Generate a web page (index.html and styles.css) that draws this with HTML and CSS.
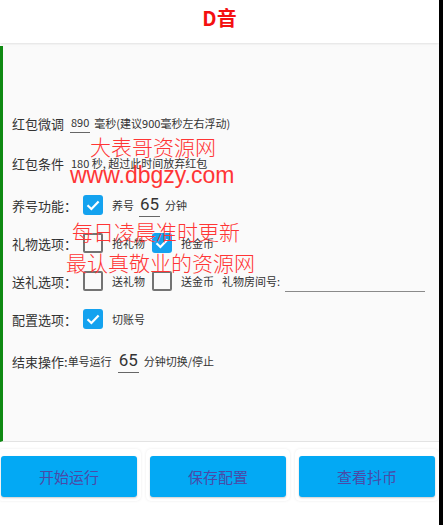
FILE: index.html
```html
<!DOCTYPE html>
<html lang="zh-CN">
<head>
<meta charset="utf-8">
<title>D音</title>
<link rel="stylesheet" href="styles.css">
</head>
<body>
<div class="app">
  <header class="topbar"><h1 class="title">D音</h1></header>
  <main class="content">
    <div class="row row-first"><span class="label">红包微调</span><span class="field">890</span><span class="small">毫秒(建议900毫秒左右浮动)</span></div>
    <div class="row"><span class="label">红包条件</span><span class="small plain">180 秒, 超过此时间放弃红包</span></div>
    <div class="row row-lg"><span class="label fixed">养号功能：</span><span class="cb on"><svg viewBox="0 0 20 20"><path d="M4.5 10.2 L8.4 14 L15.6 6.4"/></svg></span><span class="small opt">养号</span><span class="num">65</span><span class="small">分钟</span></div>
    <div class="row row-sm"><span class="label fixed">礼物选项：</span><span class="cb"></span><span class="small opt">抢礼物</span><span class="cb on"><svg viewBox="0 0 20 20"><path d="M4.5 10.2 L8.4 14 L15.6 6.4"/></svg></span><span class="small opt">抢金币</span></div>
    <div class="row row-sm"><span class="label fixed">送礼选项：</span><span class="cb"></span><span class="small opt">送礼物</span><span class="cb"></span><span class="small opt">送金币</span><span class="small room">礼物房间号:</span><span class="line"></span></div>
    <div class="row row-sm"><span class="label fixed">配置选项：</span><span class="cb on"><svg viewBox="0 0 20 20"><path d="M4.5 10.2 L8.4 14 L15.6 6.4"/></svg></span><span class="small opt">切账号</span></div>
    <div class="row row-lg"><span class="label">结束操作:</span><span class="small">单号运行</span><span class="num num-end">65</span><span class="small">分钟切换/停止</span></div>
    <div class="watermark">
      <div class="wm wm1">大表哥资源网</div>
      <div class="wm wm2">www.dbgzy.com</div>
      <div class="wm wm3">每日凌晨准时更新</div>
      <div class="wm wm4">最认真敬业的资源网</div>
    </div>
  </main>
  <footer class="actions">
    <div class="card card-first"><button class="btn">开始运行</button></div>
    <div class="card"><button class="btn">保存配置</button></div>
    <div class="card"><button class="btn">查看抖币</button></div>
  </footer>
</div>
<div class="edge"></div>
</body>
</html>
```

FILE: styles.css
```css
html, body {
  margin: 0;
  padding: 0;
  height: 100%;
}
body {
  display: flex;
  background: #fff;
  font-family: Roboto, "Noto Sans CJK SC", sans-serif;
  color: #333;
  overflow: hidden;
}
.app {
  width: 439px;
  height: 525px;
  display: flex;
  flex-direction: column;
  background: #fff;
}
.edge {
  flex: 1;
  background: #000;
}
.topbar {
  height: 43px;
  background: #fff;
  box-shadow: 0 1px 3px rgba(0,0,0,0.14);
  position: relative;
  z-index: 1;
}
.title {
  margin: 0;
  padding-top: 5px;
  text-align: center;
  font-family: "Noto Sans CJK SC", sans-serif;
  font-size: 20px;
  line-height: 26px;
  font-weight: 700;
  color: #f41010;
}
.content {
  position: relative;
  margin-top: 3px;
  height: 396px;
  box-sizing: border-box;
  border-left: 3px solid #0f8a12;
  border-bottom: 1px solid #e3e3e3;
  background: #fafafa;
  padding: 65px 0 0 9px;
}
.row {
  display: flex;
  align-items: center;
  height: 24px;
  margin-top: 16px;
  white-space: nowrap;
}
.row-first { margin-top: 0; }
.row-lg { margin-top: 18px; }
.row-sm { margin-top: 14px; }
.label {
  font-family: "Noto Sans CJK SC", sans-serif;
  font-size: 13px;
  color: #333;
}
.label.fixed {
  width: 71px;
}
.small {
  font-family: "Noto Sans CJK SC", sans-serif;
  font-size: 11px;
  color: #333;
}
.plain { margin-left: 7px; }
.field {
  font-family: "Noto Sans CJK SC", sans-serif;
  font-size: 11px;
  line-height: 13px;
  padding: 2px 1px 3px;
  margin: 0 4px 0 6px;
  border-bottom: 1px solid #666;
  color: #333;
}
.cb {
  width: 20px;
  height: 20px;
  box-sizing: border-box;
  border: 2px solid #737373;
  border-radius: 2px;
  flex: none;
}
.cb.on {
  border: none;
  background: #14a2ef;
  border-radius: 3px;
}
.cb svg {
  display: block;
  width: 20px;
  height: 20px;
}
.cb path {
  fill: none;
  stroke: #fff;
  stroke-width: 2.2;
}
.opt {
  margin: 0 7px 0 9px;
  min-width: 0;
}
.num {
  font-family: Roboto, sans-serif;
  font-size: 17px;
  line-height: 18px;
  padding: 2px 1px 3px;
  margin: 0 5px 0 -2px;
  border-bottom: 1px solid #666;
  color: #333;
}
.num-end {
  margin: 0 5px 0 6px;
}
.room {
  margin-left: 1px;
}
.line {
  width: 140px;
  height: 0;
  border-bottom: 1.5px solid #8a8a8a;
  margin: 20px 0 0 5px;
}
.watermark {
  position: absolute;
  left: 0;
  top: 86px;
  pointer-events: none;
}
.wm {
  font-family: "Noto Sans CJK SC", sans-serif;
  font-size: 21px;
  line-height: 28px;
  color: #ff3535;
  white-space: nowrap;
  font-weight: 300;
}
.wm1 { margin-left: 87px; }
.wm2 {
  margin-left: 67px;
  font-family: "Liberation Sans", Arial, sans-serif;
  font-size: 23px;
  line-height: 30px;
}
.wm3 { margin-left: 69px; margin-top: 27px; }
.wm4 { margin-left: 63px; margin-top: 3px; }
.actions {
  display: flex;
  gap: 5px;
  padding-top: 7px;
}
.card {
  width: 144px;
  box-sizing: border-box;
  padding: 7px 4px 4px;
  border-radius: 5px;
  box-shadow: 0 0 3px rgba(0,0,0,0.08);
  background: #fff;
}
.card-first { margin-left: -3px; }
.btn {
  display: block;
  width: 136px;
  height: 41px;
  border: none;
  border-radius: 3px;
  background: #03a9f4;
  box-shadow: 0 1px 2px rgba(0,0,0,0.2);
  font-family: "Noto Sans CJK SC", sans-serif;
  font-size: 15px;
  color: #4a4aa8;
  padding: 0;
}
```
